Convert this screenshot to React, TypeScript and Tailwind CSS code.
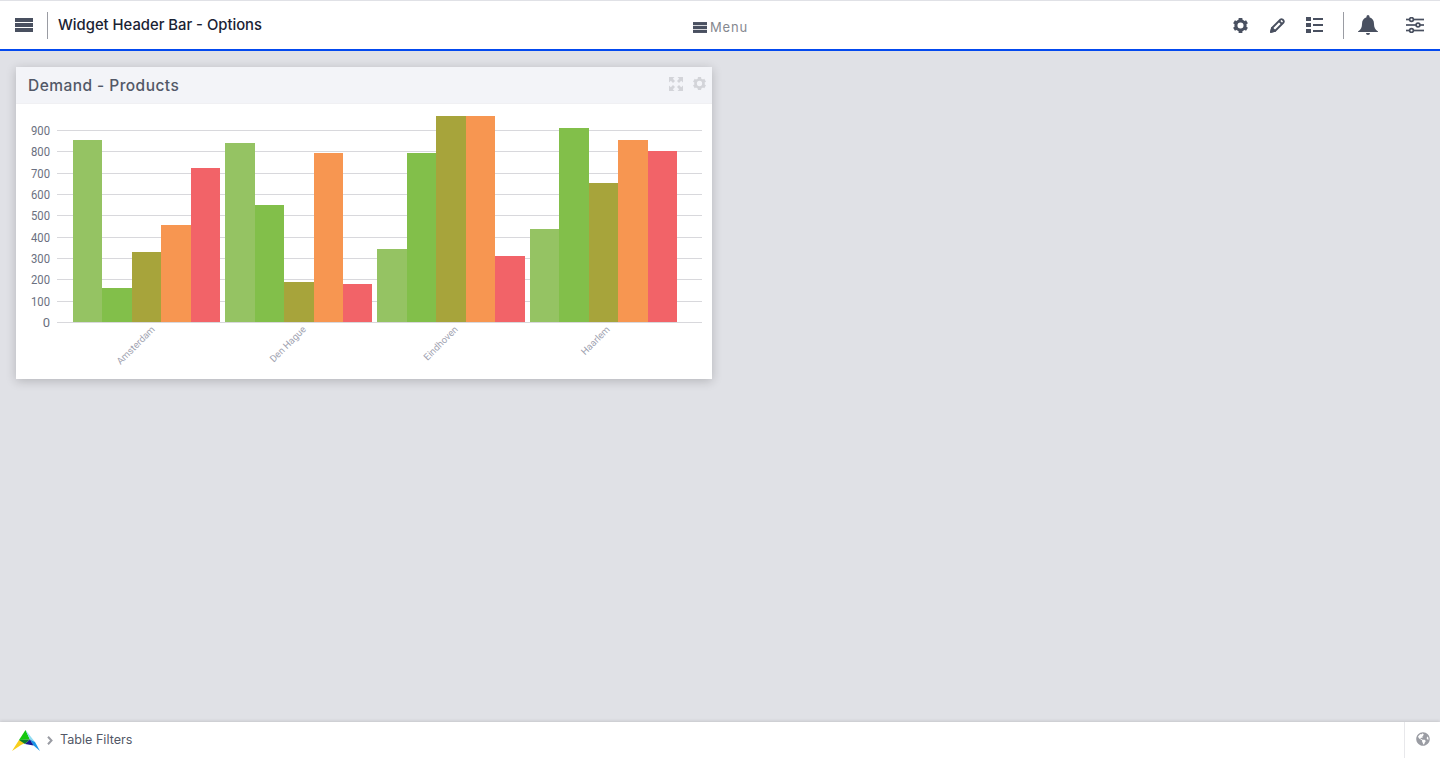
import React from 'react';
import { FaGlobeAmericas } from 'react-icons/fa';

const sans = "font-['Inter','Open_Sans',sans-serif]";

const colors = ['#95c363', '#82bf4a', '#a7a43b', '#f79651', '#f26368'];

// left edges of the six bar borders per city, tops in screenshot pixels
const groups = [
  { name: 'Amsterdam', xs: [73, 102, 132, 161, 191, 220], tops: [140, 288, 252, 225, 168], lx: 155.5, ly: 330 },
  { name: 'Den Hague', xs: [225, 255, 284, 314, 343, 372], tops: [143, 205, 282, 153, 284], lx: 306.5, ly: 330 },
  { name: 'Eindhoven', xs: [377, 407, 436, 466, 495, 525], tops: [249, 153, 116, 116, 256], lx: 458.5, ly: 330 },
  { name: 'Haarlem', xs: [530, 559, 589, 618, 648, 677], tops: [229, 128, 183, 140, 151], lx: 610.5, ly: 330 },
];

const ticks = [900, 800, 700, 600, 500, 400, 300, 200, 100, 0];

function Chart() {
  return (
    <svg width="696" height="275" viewBox="16 104 696 275" className="block">
      {ticks.map((t) => {
        const y = Math.round(322 - (t / 100) * 21.33) + 0.5;
        return (
          <g key={t}>
            <line x1="57" x2="702" y1={y} y2={y} stroke="#d8d8dc" strokeWidth="1" />
            <text x="50" y={y + 4} textAnchor="end" fontFamily="Roboto, sans-serif" fontSize="13" fill="#6b7080" textLength={t === 0 ? undefined : 19} lengthAdjust="spacingAndGlyphs">
              {t}
            </text>
          </g>
        );
      })}
      {groups.map((g) => (
        <g key={g.name}>
          {g.tops.map((top, i) => (
            <rect key={i} x={g.xs[i]} y={top} width={g.xs[i + 1] - g.xs[i]} height={322 - top} fill={colors[i]} shapeRendering="crispEdges" />
          ))}
          <text
            x={g.lx}
            y={g.ly}
            textAnchor="end"
            fontFamily="Roboto, sans-serif"
            fontSize="9.5"
            fill="#a0a2b0"
            transform={`rotate(-45 ${g.lx} ${g.ly})`}
          >
            {g.name}
          </text>
        </g>
      ))}
    </svg>
  );
}

function Bars({ className }: { className: string }) {
  return (
    <svg className={className} viewBox="0 0 18 14" fill="currentColor">
      <rect x="0" y="0" width="18" height="4" />
      <rect x="0" y="5" width="18" height="4" />
      <rect x="0" y="10" width="18" height="4" />
    </svg>
  );
}

function Gear({ className }: { className: string }) {
  return (
    <svg className={className} viewBox="0 0 16 16" fill="currentColor">
      <circle cx="8" cy="8" r="4.9" fill="none" stroke="currentColor" strokeWidth="3.3" />
      {[0, 60, 120, 180, 240, 300].map((a) => (
        <rect key={a} x="6" y="0" width="4" height="3.5" transform={`rotate(${a} 8 8)`} />
      ))}
    </svg>
  );
}

function PencilIcon() {
  return (
    <svg width="15" height="15" viewBox="0 0 15 15" fill="none" stroke="#495060" strokeWidth="1.8" strokeLinejoin="round">
      <path d="M1 14 L2 10 L10.5 1.5 Q11.5 0.8 12.5 1.5 L13.5 2.5 Q14.2 3.5 13.5 4.5 L5 13 Z" />
      <path d="M9 3 L12 6" />
      <path d="M1 14 L2 10 L5 13 Z" fill="#495060" />
    </svg>
  );
}

function ListIcon() {
  return (
    <svg width="17" height="16" viewBox="0 0 17 16" fill="#495060">
      <rect x="0" y="0" width="5" height="4" />
      <rect x="0" y="6" width="5" height="4" />
      <rect x="0" y="12" width="5" height="4" />
      <rect x="7" y="1" width="10" height="2" />
      <rect x="7" y="7" width="10" height="2" />
      <rect x="7" y="13" width="10" height="2" />
    </svg>
  );
}

function BellIcon() {
  return (
    <svg width="20" height="20" viewBox="0 0 20 20" fill="#495060">
      <path d="M10 0 A1.5 1.5 0 0 1 11.5 1.5 V2.2 C14.5 3 16 5.5 16 9 C16 12.5 17 14.5 20 16.5 V17 H0 V16.5 C3 14.5 4 12.5 4 9 C4 5.5 5.5 3 8.5 2.2 V1.5 A1.5 1.5 0 0 1 10 0 Z" />
      <path d="M8 18 H12 A2 2 0 0 1 8 18 Z" />
    </svg>
  );
}

function SlidersIcon() {
  return (
    <svg width="18" height="16" viewBox="0 0 18 16" fill="none" stroke="#495060" strokeWidth="1.7">
      <line x1="0" x2="18" y1="2.5" y2="2.5" />
      <line x1="0" x2="18" y1="8" y2="8" />
      <line x1="0" x2="18" y1="13.5" y2="13.5" />
      <circle cx="5.5" cy="2.5" r="1.9" fill="#fff" />
      <circle cx="12" cy="8" r="1.9" fill="#fff" />
      <circle cx="5.5" cy="13.5" r="1.9" fill="#fff" />
    </svg>
  );
}

function ExpandIcon() {
  return (
    <svg width="14" height="14" viewBox="0 0 14 14" fill="#d3d4d9">
      <polygon points="0,0 5.5,0 3.8,1.8 6,4 4,6 1.8,3.8 0,5.5" />
      <polygon points="14,0 8.5,0 10.2,1.8 8,4 10,6 12.2,3.8 14,5.5" />
      <polygon points="0,14 5.5,14 3.8,12.2 6,10 4,8 1.8,10.2 0,8.5" />
      <polygon points="14,14 8.5,14 10.2,12.2 8,10 10,8 12.2,10.2 14,8.5" />
    </svg>
  );
}

function Chevron() {
  return (
    <svg width="6" height="9" viewBox="0 0 6 9" fill="none" stroke="#9a9ca3" strokeWidth="2">
      <path d="M1 0.8 L4.5 4.5 L1 8.2" />
    </svg>
  );
}

function Logo() {
  return (
    <svg width="28" height="21" viewBox="0 0 28 21">
      <polygon points="13.5,0 18,9.5 7,10" fill="#14c80e" />
      <polygon points="0,21 7,10 15,12 9,15" fill="#f8cf1c" />
      <polygon points="13.5,0 23,12 18,9.5" fill="#8fdcf2" />
      <polygon points="18,9.5 23,12 28,21 21,15" fill="#1a94e6" />
      <polygon points="7,10 18,9.5 13,14" fill="#0c7d2b" />
      <polygon points="13,14 18,9.5 21.5,15.5" fill="#161a94" />
    </svg>
  );
}

export default function App() {
  return (
    <div className={`flex flex-col h-screen bg-[#e0e1e6] ${sans}`}>
      {/* Top bar */}
      <header className="relative flex items-center h-[51px] shrink-0 bg-white border-t border-t-[#e0e1e6] border-b-2 border-b-[#0349ef]">
        <div className="flex items-center pl-[15px] w-[33px] box-content">
          <Bars className="text-[#495060] w-[18px] h-[14px]" />
        </div>
        <div className="w-px h-[27px] bg-[#9a9ca3] ml-[-1px]"></div>
        <h1 className="ml-[10px] text-[14.8px] font-medium text-[#1a2233] leading-none">Widget Header Bar - Options</h1>
        <div className="absolute left-[693px] top-[20px] flex items-center gap-[3px]">
          <Bars className="text-[#495060] w-[14px] h-[11px]" />
          <span className="text-[13px] text-[#85888f] tracking-[0.8px] leading-none">Menu</span>
        </div>
        <div className="ml-auto flex items-center">
          <Gear className="text-[#495060] w-[15px] h-[15px]" />
          <div className="ml-[22px]"><PencilIcon /></div>
          <div className="ml-[21px]"><ListIcon /></div>
          <div className="w-px h-[27px] bg-[#9a9ca3] ml-[20px]"></div>
          <div className="ml-[14px]"><BellIcon /></div>
          <div className="ml-[28px] mr-[16px]"><SlidersIcon /></div>
        </div>
      </header>

      {/* Content */}
      <main className="flex-1 pt-[16px] pl-[16px]">
        <section className="w-[696px] h-[312px] bg-white shadow-[0_2px_10px_rgba(0,0,0,0.2)]">
          <div className="flex items-center h-[37px] bg-[#f3f4f8] border-b border-b-[#f0f0f3] pl-[12px] pr-[6px]">
            <h2 className="text-[15.5px] font-medium text-[#525867] tracking-[0.45px] leading-none mt-[2px]">Demand - Products</h2>
            <div className="ml-auto flex items-center gap-[10px] mt-[-3px]">
              <ExpandIcon />
              <Gear className="text-[#d3d4d9] w-[13px] h-[13px]" />
            </div>
          </div>
          <Chart />
        </section>
      </main>

      {/* Footer */}
      <footer className="flex items-center h-[36px] shrink-0 bg-white shadow-[0_-1px_3px_rgba(0,0,0,0.12)]">
        <div className="ml-[12px]"><Logo /></div>
        <div className="ml-[7px] flex"><Chevron /></div>
        <span className="ml-[7px] text-[12.6px] text-[#525867] leading-none">Table Filters</span>
        <div className="ml-auto flex items-center justify-center w-[36px] h-full border-l border-l-[#e8e8eb]">
          <FaGlobeAmericas className="text-[#9a9ca3] w-[14px] h-[14px] mt-[-3px]" />
        </div>
      </footer>
    </div>
  );
}
